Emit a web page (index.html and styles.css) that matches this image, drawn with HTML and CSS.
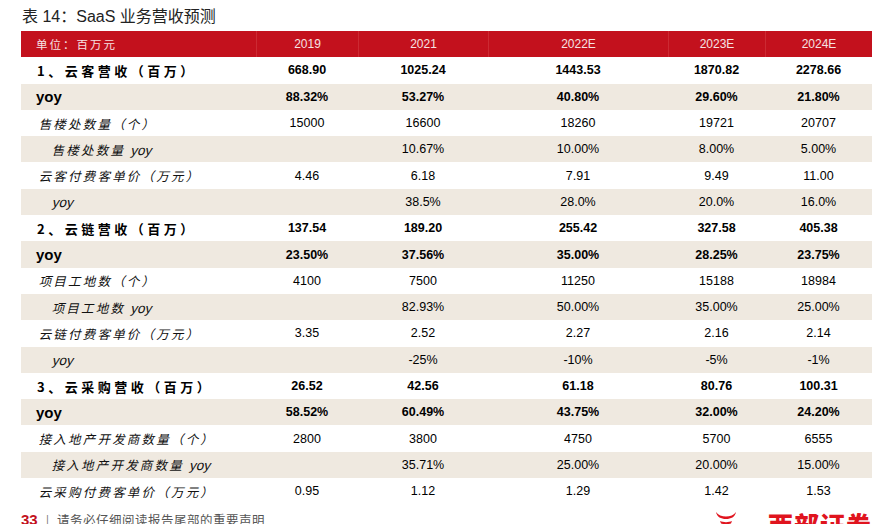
FILE: index.html
```html
<!DOCTYPE html>
<html lang="zh">
<head>
<meta charset="utf-8">
<title>表 14：SaaS 业务营收预测</title>
<link rel="stylesheet" href="styles.css">
</head>
<body>
<div class="page">
  <h1 class="title">表 14：SaaS 业务营收预测</h1>
  <div class="table">
    <div class="row head">
      <div class="label">单位：百万元</div><div>2019</div><div>2021</div><div>2022E</div><div>2023E</div><div>2024E</div>
    </div>
    <div class="row bold">
      <div class="label">1、云客营收（百万）</div><div>668.90</div><div>1025.24</div><div>1443.53</div><div>1870.82</div><div>2278.66</div>
    </div>
    <div class="row bold alt yoy">
      <div class="label">yoy</div><div>88.32%</div><div>53.27%</div><div>40.80%</div><div>29.60%</div><div>21.80%</div>
    </div>
    <div class="row">
      <div class="label it"><span class="sk">售楼处数量（个）</span></div><div>15000</div><div>16600</div><div>18260</div><div>19721</div><div>20707</div>
    </div>
    <div class="row alt">
      <div class="label it sub"><span class="sk">售楼处数量 <span class="en">yoy</span></span></div><div></div><div>10.67%</div><div>10.00%</div><div>8.00%</div><div>5.00%</div>
    </div>
    <div class="row">
      <div class="label it"><span class="sk">云客付费客单价（万元）</span></div><div>4.46</div><div>6.18</div><div>7.91</div><div>9.49</div><div>11.00</div>
    </div>
    <div class="row alt">
      <div class="label it sub"><span class="sk"><span class="en">yoy</span></span></div><div></div><div>38.5%</div><div>28.0%</div><div>20.0%</div><div>16.0%</div>
    </div>
    <div class="row bold">
      <div class="label">2、云链营收（百万）</div><div>137.54</div><div>189.20</div><div>255.42</div><div>327.58</div><div>405.38</div>
    </div>
    <div class="row bold alt yoy">
      <div class="label">yoy</div><div>23.50%</div><div>37.56%</div><div>35.00%</div><div>28.25%</div><div>23.75%</div>
    </div>
    <div class="row">
      <div class="label it"><span class="sk">项目工地数（个）</span></div><div>4100</div><div>7500</div><div>11250</div><div>15188</div><div>18984</div>
    </div>
    <div class="row alt">
      <div class="label it sub"><span class="sk">项目工地数 <span class="en">yoy</span></span></div><div></div><div>82.93%</div><div>50.00%</div><div>35.00%</div><div>25.00%</div>
    </div>
    <div class="row">
      <div class="label it"><span class="sk">云链付费客单价（万元）</span></div><div>3.35</div><div>2.52</div><div>2.27</div><div>2.16</div><div>2.14</div>
    </div>
    <div class="row alt">
      <div class="label it sub"><span class="sk"><span class="en">yoy</span></span></div><div></div><div>-25%</div><div>-10%</div><div>-5%</div><div>-1%</div>
    </div>
    <div class="row bold">
      <div class="label">3、云采购营收（百万）</div><div>26.52</div><div>42.56</div><div>61.18</div><div>80.76</div><div>100.31</div>
    </div>
    <div class="row bold alt yoy">
      <div class="label">yoy</div><div>58.52%</div><div>60.49%</div><div>43.75%</div><div>32.00%</div><div>24.20%</div>
    </div>
    <div class="row">
      <div class="label it"><span class="sk">接入地产开发商数量（个）</span></div><div>2800</div><div>3800</div><div>4750</div><div>5700</div><div>6555</div>
    </div>
    <div class="row alt">
      <div class="label it sub"><span class="sk">接入地产开发商数量 <span class="en">yoy</span></span></div><div></div><div>35.71%</div><div>25.00%</div><div>20.00%</div><div>15.00%</div>
    </div>
    <div class="row">
      <div class="label it"><span class="sk">云采购付费客单价（万元）</span></div><div>0.95</div><div>1.12</div><div>1.29</div><div>1.42</div><div>1.53</div>
    </div>
  </div>
  <div class="footer">
    <div class="note"><span class="pno">33</span><span class="bar">|</span><span class="disc">请务必仔细阅读报告尾部的重要声明</span></div>
    <div class="brand">
      <svg class="bull" width="24" height="14" viewBox="0 0 24 14">
        <path d="M2 1 C3 6 7 8 12 8 C17 8 21 6 22 1 C20 4 16 5.5 12 5.5 C8 5.5 4 4 2 1 Z" fill="#e0141e"/>
        <path d="M6 10 C9 11.5 15 11.5 18 10 L17 12.5 C14 13.5 10 13.5 7 12.5 Z" fill="#e0141e"/>
      </svg>
      <span class="bname">西部证券</span>
    </div>
  </div>
</div>
</body>
</html>
```
FILE: styles.css
```css
html, body {
  margin: 0;
  padding: 0;
  background: #ffffff;
}
body {
  font-family: "Liberation Sans", Arial, "Noto Sans CJK SC", sans-serif;
  color: #000;
}
.page {
  width: 883px;
  height: 524px;
  overflow: hidden;
  padding: 6px 0 0 21px;
  box-sizing: border-box;
}
.title {
  margin: 0 0 0 1px;
  font-size: 16px;
  font-weight: normal;
  line-height: 22px;
  height: 25px;
  color: #222;
  font-family: "Liberation Sans", "Noto Sans CJK SC", sans-serif;
}
.table {
  width: 851px;
  display: flex;
  flex-direction: column;
}
.row {
  display: grid;
  grid-template-columns: 235px 102px 130px 180px 97px 107px;
  height: 26.3px;
  align-items: center;
  font-size: 12.5px;
  text-align: center;
}
.row > div {
  height: 100%;
  display: flex;
  align-items: center;
  justify-content: center;
}
.row > .label {
  justify-content: flex-start;
  padding-left: 16px;
  font-family: "Noto Sans CJK SC", "Liberation Sans", sans-serif;
}
.head {
  background: #c3111d;
  color: #f6e2e2;
  font-size: 12px;
}
.head > div + div {
  border-left: 1px solid #cc2a33;
}
.head > .label {
  font-size: 11.5px;
  letter-spacing: 2px;
  padding-left: 15px;
}
.alt {
  background: #efe9e0;
}
.bold {
  font-weight: bold;
}
.bold > .label {
  font-size: 13px;
  letter-spacing: 3.5px;
  padding-left: 16px;
}
.yoy > .label {
  font-family: "Liberation Sans", sans-serif;
  font-size: 15px;
  letter-spacing: 0;
  padding-left: 15px;
}
.row > .it {
  font-size: 12.5px;
  letter-spacing: 2.2px;
  padding-left: 19px;
  color: #111;
}
.sk {
  display: inline-block;
  transform: skewX(-14deg);
}
.en {
  font-family: "Liberation Sans", sans-serif;
  font-size: 13.5px;
  letter-spacing: 0;
}
.row > .sub {
  padding-left: 32px;
}
.footer {
  display: flex;
  justify-content: space-between;
  align-items: flex-start;
  margin-top: 6px;
  width: 851px;
}
.note {
  display: flex;
  align-items: baseline;
  gap: 8px;
  font-size: 12.5px;
  color: #555;
  font-family: "Noto Sans CJK SC", sans-serif;
}
.pno {
  color: #c3111d;
  font-weight: bold;
  font-size: 15px;
  font-family: "Liberation Sans", sans-serif;
}
.bar {
  color: #777;
}
.disc {
  letter-spacing: 0.5px;
}
.brand {
  display: flex;
  align-items: flex-start;
  gap: 30px;
}
.bull {
  margin-top: 1px;
}
.bname {
  color: #e0141e;
  font-weight: 900;
  font-size: 25px;
  line-height: 28px;
  letter-spacing: 1px;
  font-family: "Noto Sans CJK SC", sans-serif;
}
```
